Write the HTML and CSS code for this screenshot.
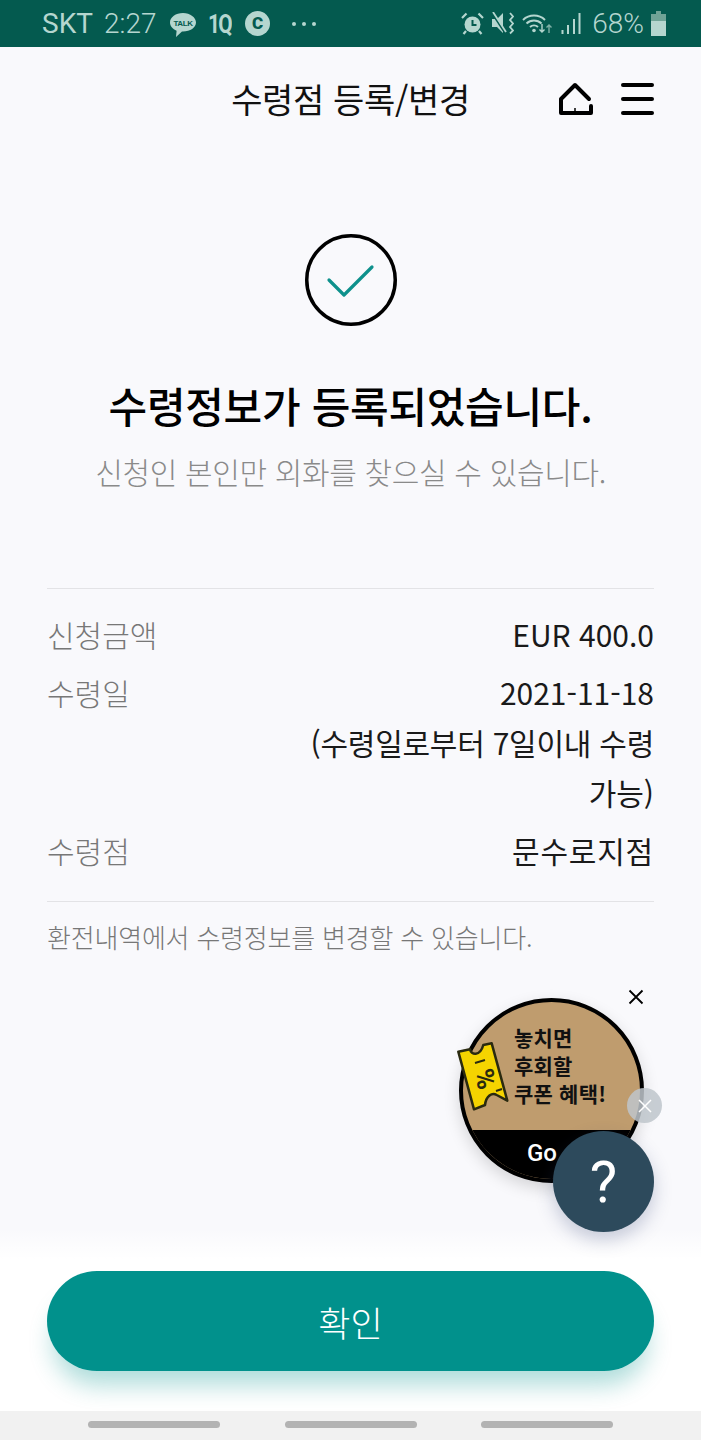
FILE: index.html
```html
<!DOCTYPE html>
<html lang="ko">
<head>
<meta charset="utf-8">
<title>수령점 등록/변경</title>
<link rel="stylesheet" href="styles.css">
</head>
<body>
<div class="phone">
  <div class="status">
    <div class="status-left">
      <span class="carrier">SKT</span>
      <span class="clock">2:27</span>
      <svg class="talk-icon" width="26" height="24" viewBox="0 0 26 24"><path d="M13 0C5.800 0 0 4.200 0 9.500c0 3.600 2.600 6.600 6.600 8.200L6 24l6-5.500h1c7.200 0 13-4 13-9S20.200 0 13 0z" fill="#b5d6cf"/><text x="13" y="12.500" class="talk">TALK</text></svg>
      <span class="oneq">1Q</span>
      <span class="c-badge">C</span>
      <span class="dots"><i></i><i></i><i></i></span>
    </div>
    <div class="status-right">
      <svg width="23" height="23" viewBox="0 0 23 23"><circle cx="11.500" cy="12.500" r="8" fill="#b5d6cf"/><path d="M11.500 8v5h4" fill="none" stroke="#045a4f" stroke-width="2"/><path d="M1 6l4.500-4.500M22 6l-4.500-4.500M5 19l-2.500 3M18 19l2.500 3" stroke="#b5d6cf" stroke-width="2.200"/></svg>
      <svg width="22" height="23" viewBox="0 0 22 23"><path d="M0 7h5l6-6v20l-6-6H0z" fill="#b5d6cf"/><path d="M0 1l13 20" stroke="#045a4f" stroke-width="2"/><path d="M1 0l13 20" stroke="#b5d6cf" stroke-width="1.800"/><path d="M18 1l3 3.500-3 3.500 3 3.500-3 3.500 3 3.500-3 3" fill="none" stroke="#b5d6cf" stroke-width="1.800"/></svg>
      <svg width="31" height="23" viewBox="0 0 31 23"><path d="M1 8a16 16 0 0 1 22 0M4.500 11.500a11 11 0 0 1 15 0M8 15a6 6 0 0 1 8 0" fill="none" stroke="#b5d6cf" stroke-width="2"/><circle cx="12" cy="18.500" r="1.800" fill="#b5d6cf"/><path d="M20 12v8m-2.500-2.500L20 20l2.500-2.500" fill="none" stroke="#b5d6cf" stroke-width="1.400"/><path d="M27 21v-8m-2.500 2.500L27 13l2.500 2.500" fill="none" stroke="#7fb0a6" stroke-width="1.400"/></svg>
      <svg width="20" height="23" viewBox="0 0 20 23"><path d="M1.500 22v-4M7 22v-9M13 22V7M18.500 22V1" stroke="#b5d6cf" stroke-width="2"/></svg>
      <span class="pct">68%</span>
      <svg width="15" height="25" viewBox="0 0 15 25"><path d="M5 0h5v3H5z" fill="#6fa396"/><rect x="0" y="3" width="15" height="7" fill="#6fa396"/><rect x="0" y="10" width="15" height="15" fill="#b5d6cf"/></svg>
    </div>
  </div>

  <main class="screen">
    <header class="topbar">
      <h1 class="title">수령점 등록/변경</h1>
      <svg class="home" width="40" height="40" viewBox="0 0 40 40"><path d="M33 21L19 7 5 21v14h30v-7" fill="none" stroke="#000" stroke-width="4" stroke-linejoin="round" stroke-linecap="round"/><path d="M19 30v5" stroke="#000" stroke-width="1.500"/></svg>
      <div class="menu"><i></i><i></i><i></i></div>
    </header>

    <section class="done">
      <svg class="check" width="92" height="92" viewBox="0 0 92 92"><circle cx="46" cy="46" r="44.250" fill="none" stroke="#000" stroke-width="3.500"/><path d="M24 46l15 15 28-28" fill="none" stroke="#0e918c" stroke-width="3.200" stroke-linecap="round" stroke-linejoin="round"/></svg>
      <h2 class="headline">수령정보가 등록되었습니다.</h2>
      <p class="sub">신청인 본인만 외화를 찾으실 수 있습니다.</p>
    </section>

    <section class="details">
      <div class="row"><span class="key">신청금액</span><span class="val">EUR 400.0</span></div>
      <div class="row"><span class="key">수령일</span><span class="val">2021-11-18<br><span class="val-tight">(수령일로부터 7일이내 수령</span><br>가능)</span></div>
      <div class="row"><span class="key">수령점</span><span class="val val-wide">문수로지점</span></div>
    </section>
    <p class="note">환전내역에서 수령정보를 변경할 수 있습니다.</p>
  </main>

  <footer class="bottom">
    <button class="confirm">확인</button>
  </footer>
  <nav class="navbar"><i></i><i></i><i></i></nav>

  <aside class="promo">
    <svg class="promo-x" width="18" height="18" viewBox="0 0 18 18"><path d="M2.500 2.500l13 13M15.500 2.500l-13 13" stroke="#000" stroke-width="1.800"/></svg>
    <div class="promo-circle">
      <div class="promo-text">놓치면<br>후회할<br>쿠폰 혜택!</div>
      <div class="promo-go">Go</div>
    </div>
    <svg class="ticket" width="56" height="72" viewBox="0 0 56 72"><path d="M2.300 11.700L14 9.300C15 15 24 17 27.300 5l8.400-1.700 15.600 57.400-10.600-5.700C36 52 30 56 29 65l-11 4.300z" fill="#f5d400" stroke="#2a2a10" stroke-width="2.500" stroke-linejoin="round"/><path d="M19 23l10-3M40 51l6-2" stroke="#2a2a10" stroke-width="2"/><text x="29" y="39" class="ticket-pct" transform="rotate(75 29 39)">%</text></svg>
    <button class="promo-close"><svg width="16" height="16" viewBox="0 0 16 16"><path d="M2 2l12 12M14 2L2 14" stroke="#fff" stroke-width="1.500"/></svg></button>
  </aside>
  <button class="help">?</button>
</div>
</body>
</html>
```

FILE: styles.css
```css
* { box-sizing: border-box; }
html, body { margin: 0; padding: 0; }
body { background: #fff; font-family: "Noto Sans CJK KR", "Noto Sans", sans-serif; }
.phone { position: relative; width: 701px; height: 1440px; overflow: hidden; display: flex; flex-direction: column; background: #fff; }

.status { height: 47px; flex: none; background: #045a4f; color: #b5d6cf; display: flex; justify-content: space-between; align-items: center; padding: 0 35px 0 42px; }
.status-left, .status-right { display: flex; align-items: center; }
.status-right svg + svg { margin-left: 8px; }
.carrier { font: 400 28px/1 "Roboto", sans-serif; width: 51px; white-space: nowrap; }
.clock { font: 300 28px/1 "Roboto", sans-serif; margin-left: 11px; width: 53px; white-space: nowrap; }
.talk { font: 700 8px "Liberation Sans", sans-serif; fill: #045a4f; text-anchor: middle; letter-spacing: -.4px; }
.talk-icon { margin-left: 13px; margin-top: 2px; }
.oneq { font: 700 26px/1 "Roboto", sans-serif; letter-spacing: -2px; margin-left: 12px; width: 24px; white-space: nowrap; transform: scaleX(.8); transform-origin: left; }
.c-badge { width: 25px; height: 25px; border-radius: 50%; background: #b5d6cf; color: #045a4f; font: 900 17px/25px "Roboto", sans-serif; text-align: center; margin-left: 13px; }
.dots { display: flex; gap: 6px; margin-left: 22px; }
.dots i { display: block; width: 4px; height: 4px; border-radius: 50%; background: #b5d6cf; }
.pct { font: 300 28px/1 "Roboto", sans-serif; margin: 0 7px 0 11px; }

.screen { flex: 1; background: #f9f9fc; padding: 0 47px; display: flex; flex-direction: column; min-height: 0; }
.topbar { height: 103px; position: relative; display: flex; align-items: center; justify-content: center; flex: none; }
.title { margin: 0; font-size: 34px; font-weight: 400; letter-spacing: -.35px; color: #111; line-height: 1; padding-top: 1px; }
.home { position: absolute; left: 509px; top: 31px; }
.menu { position: absolute; left: 574px; top: 36px; width: 33px; height: 32px; display: flex; flex-direction: column; justify-content: space-between; }
.menu i { display: block; height: 4px; background: #000; border-radius: 2px; }

.done { margin-top: 84px; display: flex; flex-direction: column; align-items: center; }
.headline { margin: 50px 0 0; font-size: 42px; line-height: 58px; font-weight: 500; letter-spacing: -.3px; color: #000; white-space: nowrap; }
.sub { margin: 17px 0 0; font-size: 30px; line-height: 40px; font-weight: 300; color: #8a8a8a; letter-spacing: -.35px; white-space: nowrap; }

.details { margin-top: 97px; border-top: 1px solid #e3e3e6; border-bottom: 1px solid #e3e3e6; padding: 20px 0 26px; display: flex; flex-direction: column; gap: 8px; }
.row { display: flex; justify-content: space-between; align-items: flex-start; }
.key { font-size: 30px; line-height: 50px; font-weight: 300; color: #777; white-space: nowrap; }
.val { font-size: 30px; line-height: 50px; color: #1a1a1a; text-align: right; font-weight: 400; }
.val-tight { letter-spacing: -.25px; }
.val-wide { letter-spacing: .8px; }
.note { margin: 12px 0 0; font-size: 26px; line-height: 46px; font-weight: 300; color: #777; letter-spacing: -.2px; white-space: nowrap; }

.bottom { flex: none; height: 182px; margin-top: -30px; position: relative; background: linear-gradient(rgba(255, 255, 255, 0), #fff 30px); padding: 42px 47px 0; }
.confirm { width: 100%; height: 100px; border: 0; border-radius: 50px; background: #01918c; color: #fff; font: 300 35px/1 "Noto Sans CJK KR", sans-serif; box-shadow: 0 20px 24px -6px rgba(1, 145, 140, .32); }
.navbar { flex: none; height: 29px; background: #f1f1f1; display: flex; justify-content: space-between; padding: 10px 88px 0; position: relative; }
.navbar i { display: block; width: 132px; height: 7px; background: #b3b3b3; border-radius: 4px; }

.promo { position: absolute; left: 456px; top: 985px; width: 210px; height: 205px; }
.promo-x { position: absolute; left: 171px; top: 3px; }
.promo-circle { position: absolute; left: 3px; top: 13px; width: 185px; height: 185px; border-radius: 50%; border: 4px solid #000; background: #bf9c6e; overflow: hidden; box-shadow: 0 6px 16px rgba(0,0,0,.15); }
.promo-text { position: absolute; left: 51px; top: 21px; font-size: 21px; line-height: 28px; font-weight: 700; letter-spacing: .2px; color: #111; white-space: nowrap; }
.promo-go { position: absolute; left: 0; right: 0; top: 128px; height: 53px; background: #000; color: #fff; font: 500 24px/47px "Roboto", sans-serif; padding-left: 64px; }
.ticket { position: absolute; left: 0; top: 55px; }
.ticket-pct { font: 700 27px "Roboto", sans-serif; fill: #2a2a10; text-anchor: middle; dominant-baseline: central; }
.promo-close { position: absolute; left: 171px; top: 103px; width: 35px; height: 35px; border-radius: 50%; border: 0; padding: 0; background: rgba(190, 198, 203, .85); display: flex; align-items: center; justify-content: center; }
.help { position: absolute; left: 553px; top: 1131px; width: 101px; height: 101px; border-radius: 50%; border: 0; background: #2d4a5c; color: #fff; font: 400 58px/1 "Roboto", sans-serif; box-shadow: 0 8px 18px rgba(45, 60, 110, .25); }
```
